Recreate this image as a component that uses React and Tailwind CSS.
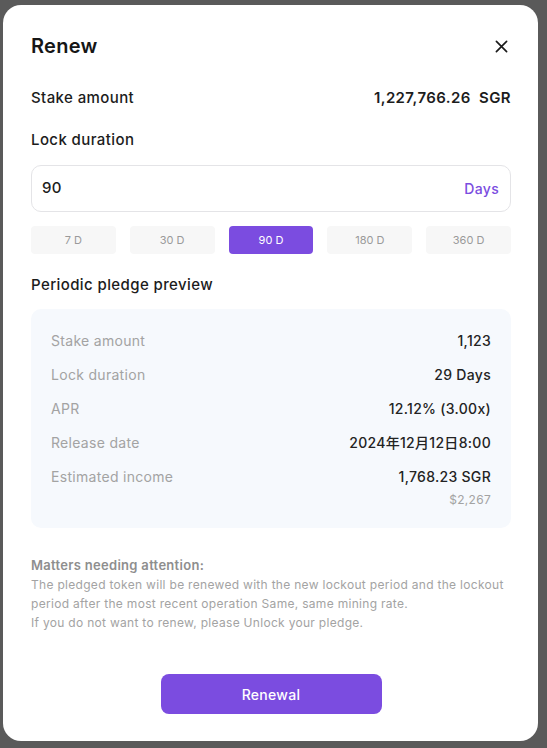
const chips = ["7 D", "30 D", "90 D", "180 D", "360 D"];

const preview = [
  { label: "Stake amount", value: "1,123" },
  { label: "Lock duration", value: "29 Days" },
  { label: "APR", value: "12.12% (3.00x)" },
  { label: "Release date", value: "2024年12月12日8:00" },
];

export default function App() {
  return (
    <div
      className="h-[748px] w-[547px] bg-[#5a5a5a] pl-[3px] pt-[5px]"
      style={{ fontFamily: "Inter, 'Noto Sans CJK SC', sans-serif" }}
    >
      <div className="flex h-[736px] w-[535px] flex-col rounded-[18px] bg-white pl-[28px] pr-[27px]">
        {/* header */}
        <div className="mt-[27px] flex h-[28px] items-center justify-between">
          <h1 className="text-[20px] font-semibold tracking-[0.3px] text-[#161616]">
            Renew
          </h1>
          <svg
            width="13"
            height="13"
            viewBox="0 0 14 14"
            className="mr-[3px]"
            fill="none"
            stroke="#1a1a1a"
            strokeWidth="1.8"
            strokeLinecap="round"
          >
            <path d="M1.5 1.5 12.5 12.5M12.5 1.5 1.5 12.5" />
          </svg>
        </div>

        {/* stake */}
        <div className="mt-[27px] flex h-[22px] items-center justify-between tracking-[0.4px]">
          <span className="text-[15px] font-medium text-[#1c1c1c]">
            Stake amount
          </span>
          <span className="text-[15px] font-semibold text-[#1c1c1c]">
            1,227,766.26&nbsp; SGR
          </span>
        </div>

        <div className="mt-[20px] flex h-[22px] items-center tracking-[0.4px]">
          <span className="text-[15px] font-medium text-[#1c1c1c]">
            Lock duration
          </span>
        </div>

        {/* input */}
        <div className="mt-[14px] flex h-[47px] items-center justify-between rounded-[10px] border border-[#e4e4e7] pl-[10px] pr-[11px] tracking-[0.3px]">
          <span className="text-[15px] font-medium text-[#1c1c1c]">90</span>
          <span className="text-[14px] font-medium text-[#7b4ddf]">Days</span>
        </div>

        {/* chips */}
        <div className="mt-[14px] grid h-[28px] grid-cols-5 gap-[14px]">
          {chips.map((c) => (
            <div
              key={c}
              className={
                c === "90 D"
                  ? "flex items-center justify-center rounded-[4px] bg-[#7b4ce0] text-[11px] text-white"
                  : "flex items-center justify-center rounded-[4px] bg-[#f7f7f7] text-[11px] text-[#9a9a9a]"
              }
            >
              {c}
            </div>
          ))}
        </div>

        <div className="mt-[20px] flex h-[22px] items-center tracking-[0.4px]">
          <span className="text-[15px] font-medium text-[#1c1c1c]">
            Periodic pledge preview
          </span>
        </div>

        {/* preview card */}
        <div className="mt-[13px] flex h-[219px] flex-col rounded-[10px] bg-[#f6f9fd] px-[20px] pt-[21px] tracking-[0.3px]">
          <div className="flex flex-col gap-[14px]">
            {preview.map((r) => (
              <div
                key={r.label}
                className="flex h-[20px] items-center justify-between text-[14px]"
              >
                <span className="text-[#a3a3a3]">{r.label}</span>
                <span className="font-medium text-[#232323]">{r.value}</span>
              </div>
            ))}
            <div className="flex flex-col">
              <div className="flex h-[20px] items-center justify-between text-[14px]">
                <span className="text-[#a3a3a3]">Estimated income</span>
                <span className="font-medium text-[#232323]">1,768.23 SGR</span>
              </div>
              <div className="mt-[5px] flex h-[18px] items-center justify-end text-[12px] text-[#a3a3a3]">
                $2,267
              </div>
            </div>
          </div>
        </div>

        {/* notice */}
        <div className="mt-[28px] text-[12px] leading-[19px] tracking-[0.3px] text-[#a3a3a3]">
          <p className="text-[13px] font-semibold text-[#8e8e8e]">
            Matters needing attention:
          </p>
          <p>
            The pledged token will be renewed with the new lockout period and the lockout
            period after the most recent operation Same, same mining rate.
          </p>
          <p>If you do not want to renew, please Unlock your pledge.</p>
        </div>

        <div className="mt-auto mb-[27px] flex justify-center">
          <button className="h-[40px] w-[221px] rounded-[8px] bg-[#7b4ce0] text-[14px] font-medium tracking-[0.3px] text-white">
            Renewal
          </button>
        </div>
      </div>
    </div>
  );
}
